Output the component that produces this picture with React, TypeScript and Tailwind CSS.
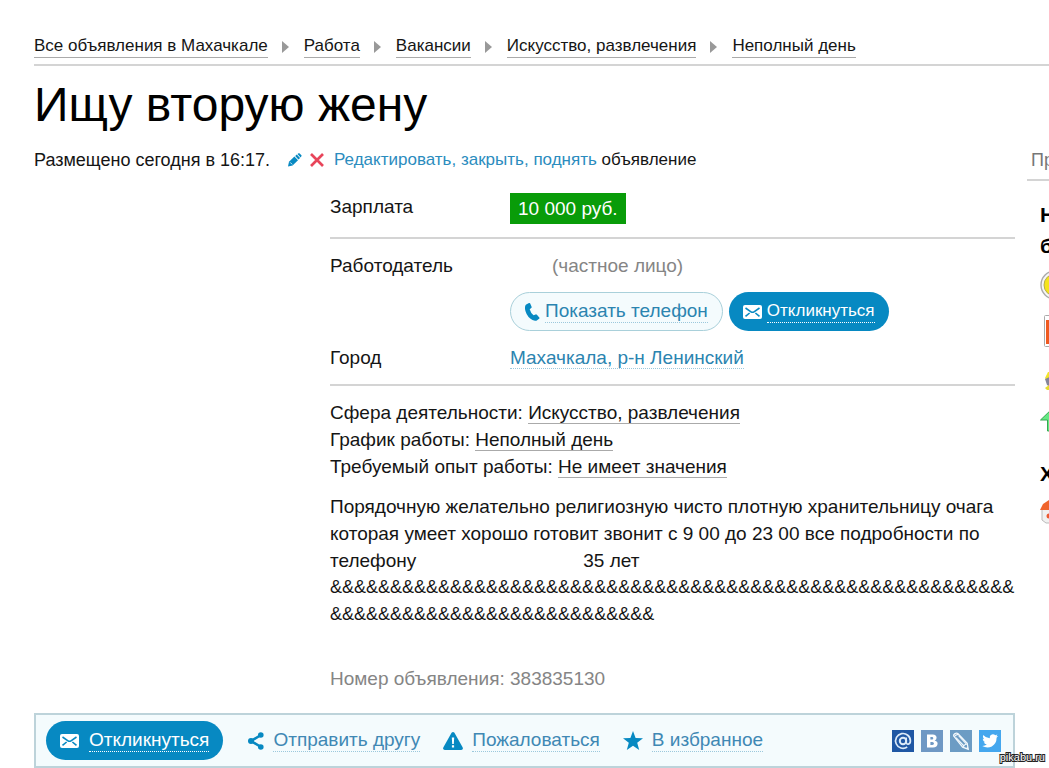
import type { ReactNode } from 'react'

const crumbs = [
  'Все объявления в Махачкале',
  'Работа',
  'Вакансии',
  'Искусство, развлечения',
  'Неполный день',
]

const facts = [
  { label: 'Сфера деятельности:', value: 'Искусство, развлечения' },
  { label: 'График работы:', value: 'Неполный день' },
  { label: 'Требуемый опыт работы:', value: 'Не имеет значения' },
]

function MailIcon() {
  return (
    <svg viewBox="0 0 19 14" className="h-[14px] w-[19px] shrink-0" aria-hidden="true">
      <rect width="19" height="14" rx="2" fill="#fff" />
      <path
        d="M2.5 3 L8 6.8 Q9.5 7.8 11 6.8 L16.5 3 M2.5 11.3 L6.6 8 M16.5 11.3 L12.4 8"
        fill="none"
        stroke="#0789c2"
        strokeWidth="1.6"
      />
    </svg>
  )
}

function PhoneIcon() {
  return (
    <svg viewBox="0 0 15 18" className="h-[18px] w-[15px] shrink-0" aria-hidden="true">
      <path
        d="M1.2 1.6 L4 0 Q4.8 -.2 5.2 .6 L6.6 3.8 Q6.8 4.6 6.2 5 L4.7 6.2 Q5.6 9.8 8.6 12.2 L10.6 11.4 Q11.4 11.2 11.9 11.8 L14.3 14.6 Q14.8 15.3 14.1 15.8 L11.8 17.5 Q11.2 18 10 17.8 Q4.6 16.6 1.6 11 Q-.9 5.8 .4 2.6 Q.6 2 1.2 1.6Z"
        fill="#0789c2"
      />
    </svg>
  )
}

function PencilIcon() {
  return (
    <svg viewBox="0 0 14 14" className="h-[14px] w-[14px] shrink-0" aria-hidden="true">
      <path d="M0 13.5 L1 8.8 L6.4 3.6 L10 7.2 L4.6 12.4Z" fill="#0789c2" />
      <path d="M7.2 3 L8.8 1.6 L12.1 5 L10.5 6.6Z" fill="#0789c2" />
      <path d="M9.5 1.1 L10.6 .3 Q11.2 0 11.7 .5 L13.4 2.2 Q13.9 2.8 13.4 3.3 L12.6 4.4Z" fill="#0789c2" />
      <path d="M2.2 9.4 L4.2 11.4" stroke="#fff" strokeWidth=".8" />
    </svg>
  )
}

function CrossIcon() {
  return (
    <svg viewBox="0 0 14 14" className="h-[14px] w-[14px] shrink-0" aria-hidden="true">
      <path d="M1 1 L13 13 M13 1 L1 13" stroke="#e8455a" strokeWidth="2.7" />
    </svg>
  )
}

function ShareIcon() {
  return (
    <svg viewBox="0 0 16 18" className="h-[18px] w-[16px] shrink-0" aria-hidden="true">
      <path d="M13 3 L3 9 L13 15" fill="none" stroke="#0789c2" strokeWidth="2.6" />
      <circle cx="12.8" cy="3" r="2.8" fill="#0789c2" />
      <circle cx="3" cy="9" r="3" fill="#0789c2" />
      <circle cx="12.8" cy="15" r="2.8" fill="#0789c2" />
    </svg>
  )
}

function WarningIcon() {
  return (
    <svg viewBox="0 0 20 18" className="h-[18px] w-[20px] shrink-0" aria-hidden="true">
      <path d="M8.6 .8 Q10 -.8 11.4 .8 L19.7 15.6 Q20.4 17.8 18.2 18 H1.8 Q-.4 17.8 .3 15.6Z" fill="#0789c2" />
      <path d="M8.8 5.4 H11.2 L10.8 12 H9.2Z M8.9 13.2 H11.1 V15.4 H8.9Z" fill="#fff" />
    </svg>
  )
}

function StarIcon() {
  return (
    <svg viewBox="0 0 20 19" className="h-[19px] w-[20px] shrink-0" aria-hidden="true">
      <path d="M10 0 L12.6 6.9 L20 7.2 L14.2 11.7 L16.2 19 L10 14.8 L3.8 19 L5.8 11.7 L0 7.2 L7.4 6.9Z" fill="#0789c2" />
    </svg>
  )
}

function DottedLabel({ children }: { children: ReactNode }) {
  return <span className="border-b border-dotted border-current leading-[22px]">{children}</span>
}

function ActionLink({ icon, children }: { icon: ReactNode; children: ReactNode }) {
  return (
    <a href="#" className="flex items-center gap-[9px] text-[#4088b4]">
      {icon}
      <span className="border-b border-dotted border-[#9cc8dc] leading-[22px]">{children}</span>
    </a>
  )
}

function SocialLinks() {
  return (
    <div className="flex gap-[7px]">
      <a href="#" aria-label="Мой Мир">
        <svg viewBox="0 0 22 22" className="h-[22px] w-[22px]">
          <rect width="22" height="22" fill="#1f57a4" />
          <circle cx="11" cy="11" r="3.2" fill="none" stroke="#dceaf8" strokeWidth="2" />
          <path
            d="M14.2 7.6 V12 Q14.4 14.4 16.2 14.2 Q18.4 13.6 18.4 11 A7.4 7.4 0 1 0 15.2 17"
            fill="none"
            stroke="#dceaf8"
            strokeWidth="1.7"
          />
        </svg>
      </a>
      <a href="#" aria-label="ВКонтакте">
        <svg viewBox="0 0 22 22" className="h-[22px] w-[22px]">
          <rect width="22" height="22" fill="#6f98c4" />
          <path
            d="M6 4.5 H11.8 Q15.6 4.8 15.6 7.8 Q15.6 9.8 13.6 10.5 Q16.6 11.2 16.6 13.8 Q16.4 17.4 12 17.5 H6Z M9.4 7 V9.6 H11 Q12.3 9.4 12.3 8.2 Q12.2 7 11 7Z M9.4 12 V15 H11.3 Q13 14.8 13 13.4 Q12.9 12.1 11.3 12Z"
            fill="#fff"
            fillRule="evenodd"
          />
        </svg>
      </a>
      <a href="#" aria-label="Живой Журнал">
        <svg viewBox="0 0 22 22" className="h-[22px] w-[22px]">
          <rect width="22" height="22" fill="#6c9cc4" />
          <path
            d="M3.6 5.8 Q3.4 4.6 5 3.6 Q6.6 2.6 7.8 3.6 L17.2 13.2 L18.2 19.2 L12.6 17.2Z"
            fill="none"
            stroke="#f2f8fc"
            strokeWidth="1.3"
          />
          <path d="M6 7.6 L14 16 M8.6 5.6 L16 13.6 M4.2 7 Q5.2 4.8 8 4.4 M13.4 17 Q14 14.4 17 14" fill="none" stroke="#f2f8fc" strokeWidth="1.1" />
          <path d="M16.2 18.2 L18.4 19.4 L17.8 16.6Z" fill="#f2f8fc" />
        </svg>
      </a>
      <a href="#" aria-label="Twitter">
        <svg viewBox="0 0 22 22" className="h-[22px] w-[22px]">
          <rect width="22" height="22" fill="#45a7ee" />
          <path
            d="M4.2 5 Q7 8.2 10.8 8.3 Q10.4 4.6 13.8 4.2 Q15.4 4.2 16.3 5.2 L18.4 4.4 L17.4 6.3 L19 6 L17.6 7.7 Q17.6 13.6 12.8 16.4 Q8 18.6 3.2 15.9 Q6 16 7.8 14.5 Q5.4 14.2 4.8 12.3 H6.2 Q3.8 11.2 3.7 8.8 L5 9.2 Q3.2 7.4 4.2 5Z"
            fill="#fff"
          />
        </svg>
      </a>
    </div>
  )
}

function Sidebar() {
  return (
    <aside className="w-[22px] shrink-0 overflow-hidden whitespace-nowrap">
      <div className="border-b-2 border-[#d4d4d4] pb-[7px] pl-1 text-[18px] leading-6 text-[#777]">Пр</div>
      <div className="flex flex-col items-start pl-[13px]">
        <h2 className="mt-[18px] text-[21px] leading-[31px] font-bold text-black">
          Н<br />б
        </h2>
        <svg viewBox="0 0 30 30" className="mt-[9px] h-[30px] w-[30px]" aria-hidden="true">
          <circle cx="15" cy="15" r="14" fill="#f6f6f6" stroke="#aaa" strokeWidth="1.4" />
          <circle cx="15" cy="15" r="11" fill="#f5e41c" stroke="#b6ac50" />
        </svg>
        <svg viewBox="0 0 30 32" className="mt-[15px] ml-1 h-[32px] w-[30px]" aria-hidden="true">
          <rect x=".5" y=".5" width="28" height="31" rx="1" fill="#fff" stroke="#aaa" />
          <rect x="2" y="5" width="24" height="24" fill="#f05a20" />
        </svg>
        <svg viewBox="0 0 24 20" className="mt-[24px] ml-1 h-[20px] w-[24px]" aria-hidden="true">
          <path d="M1 7 L4 1 H20 V7 H7 L3 10Z" fill="#f2e52a" />
          <path d="M1 8 L8 5 V17 L3 14Z" fill="#85859a" />
          <path d="M1 17 L5 14 H20 V19 H3Z" fill="#e8dc30" />
        </svg>
        <svg viewBox="0 0 26 24" className="mt-[17px] h-[24px] w-[26px]" aria-hidden="true">
          <path d="M13 0 L26 12 H19 V23 H7.5 V12 H.5Z" fill="#66e884" stroke="#35a850" />
        </svg>
        <h2 className="mt-[26px] text-[21px] leading-[31px] font-bold text-black">Х</h2>
        <svg viewBox="0 0 26 24" className="mt-[11px] h-[24px] w-[26px]" aria-hidden="true">
          <path d="M2 9 H24 V23 H6 L2 20Z" fill="#f1f1f1" stroke="#bbb" />
          <path d="M0 10 L3 4 L9 0 H20 L26 10Z" fill="#f0642c" />
          <circle cx="9" cy="16" r="2.5" fill="#ec5a30" />
        </svg>
      </div>
    </aside>
  )
}

export default function App() {
  return (
    <div className="relative overflow-hidden bg-white pl-[34px] font-['Liberation_Sans',Arial,sans-serif] text-[19px] text-[#151515]">
      <nav className="flex items-center gap-[14px] border-b-2 border-[#d4d4d4] pt-[35px] pb-[6px] text-[17px] whitespace-nowrap">
        {crumbs.map((crumb, i) => (
          <div key={crumb} className="flex items-center gap-[14px]">
            {i > 0 && (
              <svg viewBox="0 0 8 12" className="h-[12px] w-[8px]" aria-hidden="true">
                <path d="M0 0 L7 6 L0 12Z" fill="#999" />
              </svg>
            )}
            <a href="#" className="border-b border-[#aaa] leading-[22px]">
              {crumb}
            </a>
          </div>
        ))}
      </nav>

      <h1 className="mt-[13px] text-5xl leading-[52px] text-black">Ищу вторую жену</h1>

      <div className="mt-[17px] flex gap-3">
        <main className="min-w-0 flex-1">
          <div className="flex items-center text-[17px] leading-6 whitespace-nowrap">
            <span className="text-[18px]">Размещено сегодня в 16:17.</span>
            <span className="mr-[10px] ml-[18px] flex gap-2">
              <PencilIcon />
              <CrossIcon />
            </span>
            <span className="text-[#2b8cbe]">
              <a href="#">Редактировать</a>, <a href="#">закрыть</a>, <a href="#">поднять</a>{' '}
              <span className="text-[#151515]">объявление</span>
            </span>
          </div>

          <div className="pl-[296px]">
            <dl>
              <div className="mt-[21px] flex border-b-2 border-[#d4d4d4] pb-[13px]">
                <dt className="w-[180px] shrink-0 leading-7">Зарплата</dt>
                <dd className="bg-[#099c09] px-2 leading-[31px] text-white">10 000 руб.</dd>
              </div>
              <div className="mt-[15px] flex leading-6">
                <dt className="w-[180px] shrink-0">Работодатель</dt>
                <dd>
                  <div className="pl-[42px] text-[#858585]">(частное лицо)</div>
                  <div className="mt-[14px] flex gap-[6px] whitespace-nowrap">
                    <button
                      type="button"
                      className="flex h-[39px] items-center gap-[5px] rounded-full border border-[#a9d0da] bg-[#f4fbfd] px-[14px] text-[#2b84b0]"
                    >
                      <PhoneIcon />
                      <span className="border-b border-dotted border-[#9cc8dc] leading-[22px]">Показать телефон</span>
                    </button>
                    <button
                      type="button"
                      className="flex h-[39px] items-center gap-[5px] rounded-full bg-[#0789c2] px-[14px] text-[17px] text-white"
                    >
                      <MailIcon />
                      <DottedLabel>Откликнуться</DottedLabel>
                    </button>
                  </div>
                </dd>
              </div>
              <div className="mt-[15px] flex border-b-2 border-[#d4d4d4] pb-[14px] leading-6">
                <dt className="w-[180px] shrink-0">Город</dt>
                <dd>
                  <a href="#" className="border-b border-dotted border-[#9cc8dc] text-[#2b84b0]">
                    Махачкала, р-н Ленинский
                  </a>
                </dd>
              </div>
            </dl>

            <ul className="mt-[13px] leading-[27px]">
              {facts.map((fact) => (
                <li key={fact.label}>
                  {fact.label}{' '}
                  <a href="#" className="border-b border-[#aaa]">
                    {fact.value}
                  </a>
                </li>
              ))}
            </ul>

            <p className="mt-[13px] leading-[27px]">
              Порядочную желательно религиозную чисто плотную хранительницу очага
              которая умеет хорошо готовит звонит с 9 00 до 23 00 все подробности по
              телефону<span className="ml-[167px] inline-block">35 лет</span>
            </p>
            <p className="text-[18px] leading-[27px] break-all">{'&'.repeat(84)}</p>

            <p className="mt-[37px] leading-[27px] text-[#858585]">Номер объявления: 383835130</p>
          </div>

          <div className="mt-[21px] flex items-center border-2 border-[#bdd3da] bg-[#f4fbfd] py-[6px] pr-3 pl-[10px] whitespace-nowrap">
            <button
              type="button"
              className="flex h-[39px] items-center gap-[10px] rounded-full bg-[#0789c2] px-[14px] text-white"
            >
              <MailIcon />
              <DottedLabel>Откликнуться</DottedLabel>
            </button>
            <div className="ml-[25px] flex gap-[23px]">
              <ActionLink icon={<ShareIcon />}>Отправить другу</ActionLink>
              <ActionLink icon={<WarningIcon />}>Пожаловаться</ActionLink>
              <ActionLink icon={<StarIcon />}>В избранное</ActionLink>
            </div>
            <div className="ml-auto">
              <SocialLinks />
            </div>
          </div>
        </main>
        <Sidebar />
      </div>

      <span className="absolute right-1 bottom-1 text-[11px] leading-[13px] text-white [paint-order:stroke] [-webkit-text-stroke:2px_#222]">
        pikabu.ru
      </span>
    </div>
  )
}
